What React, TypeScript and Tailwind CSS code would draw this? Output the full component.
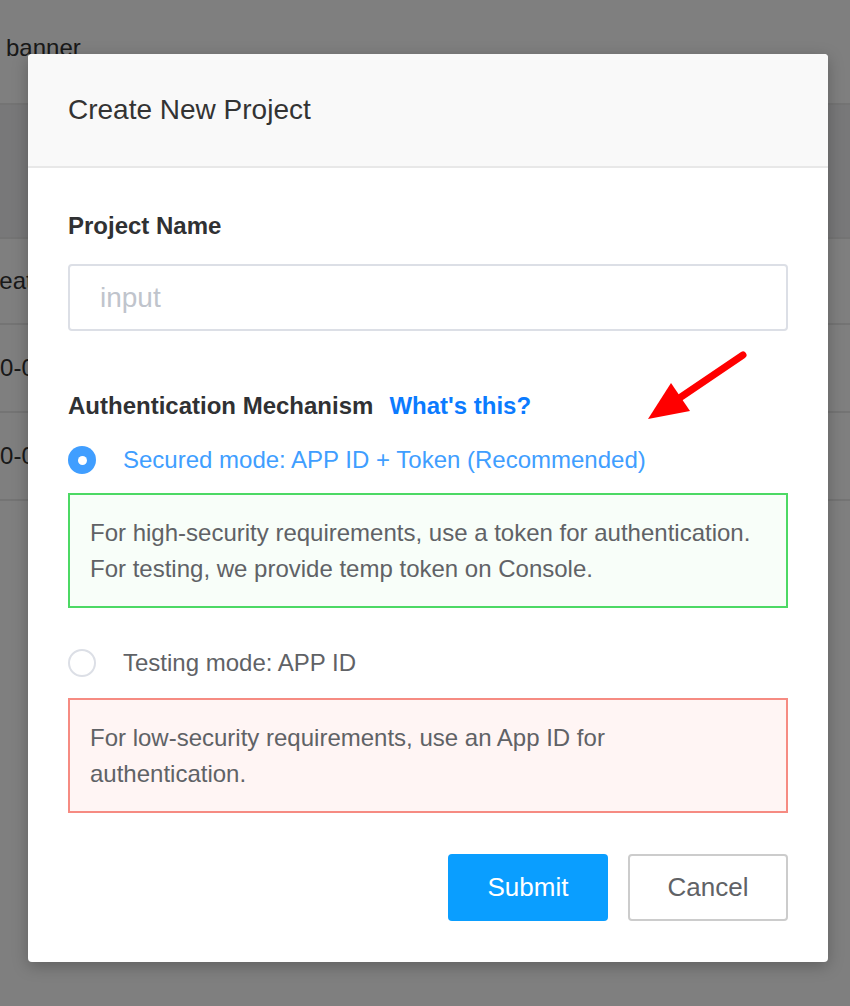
import React from "react";

function Radio({ checked }: { checked: boolean }) {
  if (checked) {
    return (
      <span className="flex h-[28px] w-[28px] shrink-0 items-center justify-center rounded-full bg-[#409eff]">
        <span className="h-[9px] w-[9px] rounded-full bg-white" />
      </span>
    );
  }
  return <span className="h-[28px] w-[28px] shrink-0 rounded-full border-2 border-[#dcdfe6] bg-white" />;
}

export default function App() {
  return (
    <div
      className="relative h-[1006px] w-full overflow-hidden bg-white text-[#333]"
      style={{ fontFamily: '"Liberation Sans", Arial, sans-serif' }}
    >
      {/* page behind the dialog */}
      <div className="flex h-[105px] items-center border-b-2 border-[#e8e8e8] pl-[6px] pb-[8px] text-[24px]">banner</div>
      <div className="h-[132px] bg-[#f0f1f2]" />
      <div className="flex h-[88px] items-center border-y-2 border-[#e8e8e8] text-[24px] whitespace-nowrap">
        <span className="ml-[-26px]">Created Time</span>
      </div>
      <div className="flex h-[88px] items-center border-b-2 border-[#e8e8e8] text-[24px] whitespace-nowrap">
        <span className="ml-[-40px]">2020-03-12 10:21:05</span>
      </div>
      <div className="flex h-[88px] items-center border-b-2 border-[#e8e8e8] text-[24px] whitespace-nowrap">
        <span className="ml-[-40px]">2020-03-10 16:42:18</span>
      </div>

      {/* overlay */}
      <div className="absolute inset-0 bg-black/50 pl-[28px] pt-[54px]">
        <div className="w-[800px] overflow-hidden rounded-[4px] bg-white shadow-[0_4px_16px_rgba(0,0,0,0.25)]">
          <div className="flex h-[114px] items-center border-b-2 border-[#e8e8e8] bg-[#f9f9f9] px-[40px] text-[28px] text-[#333]">
            Create New Project
          </div>

          <div className="px-[40px] pt-[40px] pb-[41px]">
            <div className="text-[24px] font-bold leading-[36px] text-[#303133]">Project Name</div>
            <div className="mt-[20px] flex h-[67px] items-center rounded-[4px] border-2 border-[#dcdfe6] px-[30px] text-[28px] text-[#c0c4cc]">
              input
            </div>

            <div className="mt-[57px] flex items-center gap-[16px] text-[24px] font-bold leading-[36px]">
              <span className="text-[#303133]">Authentication Mechanism</span>
              <span className="text-[#0b7bff]">What&apos;s this?</span>
            </div>

            <div className="mt-[18px] flex h-[36px] items-center gap-[27px]">
              <Radio checked />
              <span className="text-[24px] text-[#409eff]">Secured mode: APP ID + Token (Recommended)</span>
            </div>
            <div className="mt-[15px] border-2 border-[#4cd964] bg-[#f8fef9] px-[20px] py-[20px] text-[24px] leading-[35.5px] text-[#606266]">
              For high-security requirements, use a token for authentication.
              <br />
              For testing, we provide temp token on Console.
            </div>

            <div className="mt-[37px] flex h-[36px] items-center gap-[27px]">
              <Radio checked={false} />
              <span className="text-[24px] text-[#606266]">Testing mode: APP ID</span>
            </div>
            <div className="mt-[17px] border-2 border-[#f68b82] bg-[#fff5f4] px-[20px] py-[20px] text-[24px] leading-[35.5px] text-[#606266]">
              For low-security requirements, use an App ID for
              <br />
              authentication.
            </div>

            <div className="mt-[41px] flex justify-end gap-[20px]">
              <button className="h-[67px] w-[160px] rounded-[4px] bg-[#0a9eff] text-[26px] text-white">Submit</button>
              <button className="h-[67px] w-[160px] rounded-[4px] border-2 border-[#cccccc] bg-white text-[26px] text-[#606266]">
                Cancel
              </button>
            </div>
          </div>
        </div>
      </div>

      {/* red annotation arrow */}
      <svg className="pointer-events-none absolute left-[630px] top-[340px]" width="130" height="95" viewBox="630 340 130 95">
        <line x1="743" y1="355" x2="678" y2="399" stroke="#ff0000" strokeWidth="7" strokeLinecap="round" />
        <polygon points="648,419 671,383 690,411" fill="#ff0000" />
      </svg>
    </div>
  );
}
